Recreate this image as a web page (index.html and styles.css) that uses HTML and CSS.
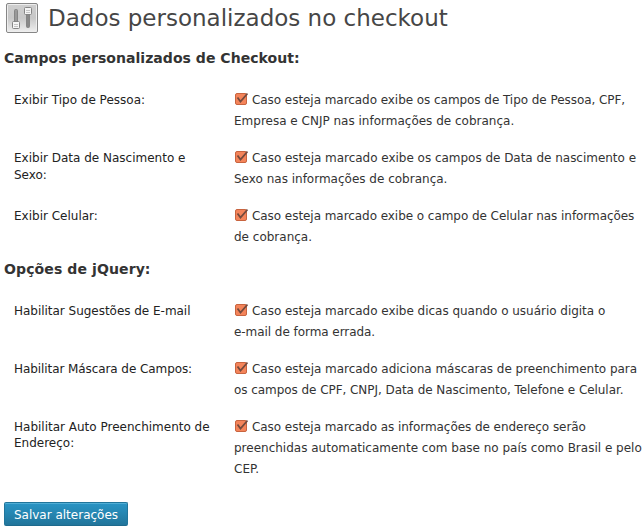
FILE: index.html
```html
<!DOCTYPE html>
<html lang="pt-BR">
<head>
<meta charset="utf-8">
<title>Dados personalizados no checkout</title>
<link rel="stylesheet" href="styles.css">
</head>
<body>
<svg width="0" height="0" class="defs">
<symbol id="check" viewBox="0 0 14 14">
<rect x="1.5" y="1.5" width="11" height="11" rx="1.5" fill="#f4845a" stroke="#c8643f"/>
<path d="M3.500 5.500l3 4L13.500 1.500" fill="none" stroke="#744a3d" stroke-width="1.800"/>
</symbol>
</svg>
<header class="title">
<svg class="title-icon" width="34" height="34" viewBox="0 0 34 34">
<defs>
<linearGradient id="panel" x1="0" y1="0" x2="0" y2="1"><stop offset="0" stop-color="#cfcfcf"/><stop offset="0.5" stop-color="#c8c8c8"/><stop offset="1" stop-color="#f0f0f0"/></linearGradient>
</defs>
<rect x="1.500" y="0.500" width="31" height="29" rx="1.500" fill="url(#panel)" stroke="#868686"/>
<rect x="2.500" y="1.500" width="29" height="27" rx="1" fill="none" stroke="#eee"/>
<rect x="9.500" y="6.500" width="3" height="14" rx="1" fill="#999" stroke="#858585"/>
<rect x="21.500" y="10.500" width="3" height="14" rx="1" fill="#888" stroke="#858585"/>
<rect x="7.500" y="18.500" width="7" height="7" rx="1" fill="#f5f5f5" stroke="#858585"/>
<path d="M9 21.500h4M9 23.500h4" stroke="#c4c4c4"/>
<rect x="19.500" y="4.500" width="7" height="7" rx="1" fill="#f5f5f5" stroke="#858585"/>
<path d="M21 7.500h4M21 9.500h4" stroke="#c4c4c4"/>
</svg>
<h1>Dados personalizados no checkout</h1>
</header>
<h2>Campos personalizados de Checkout:</h2>
<div class="fields">
<div class="row"><div class="name">Exibir Tipo de Pessoa:</div><label class="desc"><svg class="box"><use href="#check"/></svg><span class="tight">Caso esteja marcado exibe os campos de Tipo de Pessoa, CPF,</span><br>Empresa e CNJP nas informações de cobrança.</label></div>
<div class="row"><div class="name">Exibir Data de Nascimento e<br>Sexo:</div><label class="desc"><svg class="box"><use href="#check"/></svg><span class="snug">Caso esteja marcado exibe os campos de Data de nascimento e</span><br>Sexo nas informações de cobrança.</label></div>
<div class="row"><div class="name">Exibir Celular:</div><label class="desc"><svg class="box"><use href="#check"/></svg><span class="tight">Caso esteja marcado exibe o campo de Celular nas informações</span><br>de cobrança.</label></div>
</div>
<h2 class="second">Opções de jQuery:</h2>
<div class="fields">
<div class="row"><div class="name snug">Habilitar Sugestões de E-mail</div><label class="desc"><svg class="box"><use href="#check"/></svg><span class="snug">Caso esteja marcado exibe dicas quando o usuário digita o</span><br><span class="tight">e-mail de forma errada.</span></label></div>
<div class="row"><div class="name tighter">Habilitar Máscara de Campos:</div><label class="desc"><svg class="box"><use href="#check"/></svg><span class="snug">Caso esteja marcado adiciona máscaras de preenchimento para</span><br><span class="tight">os campos de CPF, CNPJ, Data de Nascimento, Telefone e Celular.</span></label></div>
<div class="row"><div class="name name-compact">Habilitar Auto Preenchimento de<br>Endereço:</div><label class="desc"><svg class="box"><use href="#check"/></svg><span class="tight">Caso esteja marcado as informações de endereço serão</span><br>preenchidas automaticamente com base no país como Brasil e pelo<br>CEP.</label></div>
</div>
<button class="save" type="button">Salvar alterações</button>
</body>
</html>
```
FILE: styles.css
```css
* { box-sizing: border-box; }
body { margin: 0; height: 530px; overflow: hidden; background: #fff; color: #333; font: 12px/21px "DejaVu Sans", sans-serif; }
.defs { position: absolute; }
.title { display: flex; align-items: center; height: 36px; padding-left: 5px; }
.title-icon { flex: none; margin-top: 4px; }
h1 { margin: 0 0 0 9px; font-size: 23px; font-weight: 400; line-height: 36px; color: #464646; white-space: nowrap; }
h2 { margin: 0; padding: 12px 4px 0; height: 43px; font-size: 14.05px; line-height: 20px; letter-spacing: 0.01px; color: #333; }
.second { padding-top: 6px; height: 37px; letter-spacing: 0.08px; }
.fields { padding: 0 0 0 14px; }
.row { display: grid; grid-template-columns: 220px 1fr; padding: 11px 0 5px; }
.name { color: #222; line-height: 16.500px; padding-top: 2px; white-space: nowrap; }
.name-compact { line-height: 16px; }
.desc { white-space: nowrap; }
.snug { letter-spacing: -0.025px; }
.tight { letter-spacing: -0.055px; }
.tighter { letter-spacing: -0.08px; }
.box { width: 14px; height: 14px; margin-right: 4px; vertical-align: -2px; }
.save { display: block; margin: 17px 0 0 4px; width: 124px; height: 24px; padding: 1px 0 0; border: 1px solid #21759b; border-bottom-color: #1e6a8d; border-radius: 2px; background: linear-gradient(#2a95c5, #21759b); box-shadow: inset 0 1px 0 rgba(120, 200, 230, 0.5); color: #fff; font: 12px "DejaVu Sans", sans-serif; }
```
